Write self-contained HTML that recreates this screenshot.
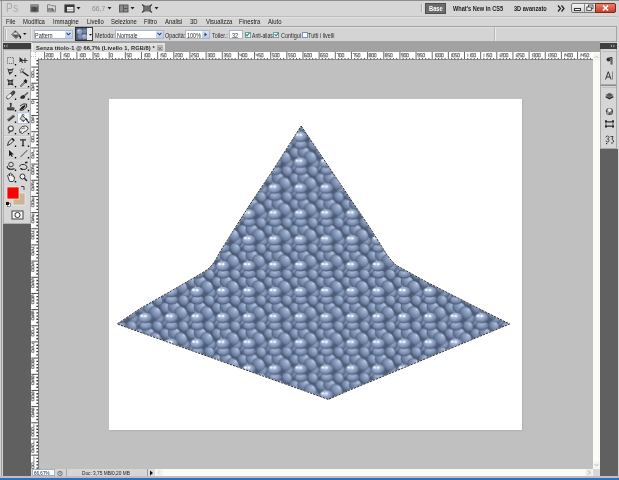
<!DOCTYPE html>
<html><head><meta charset="utf-8">
<style>
*{margin:0;padding:0;box-sizing:border-box}
html,body{width:619px;height:480px;overflow:hidden;background:#d4d4d4;font-family:"Liberation Sans",sans-serif;color:#111}
.a{position:absolute}
.t{position:absolute;white-space:nowrap;font-size:7px;line-height:8px}
.m{position:absolute;white-space:nowrap;font-size:7px;line-height:8px;top:17.5px;color:#1a1a1a;transform:scaleX(0.84);transform-origin:left}
.a{white-space:nowrap}
.m,.o,.gt{filter:grayscale(1)}
.o{position:absolute;white-space:nowrap;font-size:6.5px;line-height:7px;color:#2a2a2a;transform:scaleX(0.84) translateY(0.6px);transform-origin:left}
</style></head><body>
<!-- frame -->
<div class="a" style="left:0;top:0;width:619px;height:1px;background:#8e8e8e"></div>
<div class="a" style="left:1px;top:1px;width:1px;height:477px;background:#9a9a9a"></div>


<!-- app bar -->
<div class="a" style="left:2px;top:1px;width:615px;height:15px;background:#d6d6d6"></div>
<div class="a" style="left:2px;top:15.6px;width:615px;height:1px;background:#bdbdbd"></div>
<!-- menu bar -->
<div class="a" style="left:2px;top:16.6px;width:615px;height:9.4px;background:#d6d6d6"></div>
<div class="m" style="left:6px">File</div>
<div class="m" style="left:23px">Modifica</div>
<div class="m" style="left:53px">Immagine</div>
<div class="m" style="left:87px">Livello</div>
<div class="m" style="left:111px">Selezione</div>
<div class="m" style="left:144px">Filtro</div>
<div class="m" style="left:165px">Analisi</div>
<div class="m" style="left:190px">3D</div>
<div class="m" style="left:206px">Visualizza</div>
<div class="m" style="left:239px">Finestra</div>
<div class="m" style="left:268px">Aiuto</div>

<!-- app bar items -->
<div class="a" style="left:6px;top:0.6px;font-size:12.2px;line-height:14px;color:#ababab;letter-spacing:0.6px;transform:scaleX(0.82);transform-origin:left">Ps</div>
<svg class="a" style="left:29.5px;top:4px" width="9" height="8.5" viewBox="0 0 9 8.5"><rect x="0.4" y="0.4" width="8.2" height="7.7" rx="1" fill="#5e5e5e" stroke="#8a8a8a" stroke-width="0.8"/><rect x="1" y="1" width="7" height="1.6" fill="#909090"/><path d="M3 3.6v3.2h1.3q1 0 1-0.8q0-0.7-1-0.8q0.8-0.1 0.8-0.8q0-0.8-0.9-0.8z" fill="none" stroke="#2e2e2e" stroke-width="0.6"/><path d="M5.6 6.8v-1.8q0.3-0.6 1-0.6" fill="none" stroke="#2e2e2e" stroke-width="0.6"/></svg>
<svg class="a gt" style="left:46px;top:3px" width="11" height="10" viewBox="0 0 11 10"><path d="M1.5 1.8h3l1 1h4v6h-8z" fill="#d4d4d4" stroke="#7a7a7a" stroke-width="0.9"/><text x="2.2" y="7.6" font-size="4.3" font-weight="bold" font-family="Liberation Sans" fill="#3a3a3a">Mb</text></svg>
<svg class="a" style="left:64px;top:4px" width="11" height="9" viewBox="0 0 11 9"><rect x="1" y="1" width="9" height="7" fill="#e8e8e8" stroke="#3a3a3a" stroke-width="1.2"/><rect x="1" y="1" width="9" height="2" fill="#3a3a3a"/><rect x="1" y="1" width="2" height="7" fill="#3a3a3a"/><line x1="3" y1="5.5" x2="10" y2="5.5" stroke="#999" stroke-width="0.6"/></svg>
<svg class="a" style="left:76px;top:7px" width="5" height="3"><path d="M0.5 0h4l-2 2.5z" fill="#222"/></svg>
<div class="a" style="left:92px;top:4px;font-size:8px;line-height:9px;color:#8a8a8a;transform:scaleX(0.85);transform-origin:left">66,7</div>
<svg class="a" style="left:107px;top:7px" width="5" height="3"><path d="M0.5 0h4l-2 2.5z" fill="#222"/></svg>
<svg class="a" style="left:118px;top:4px" width="11" height="9" viewBox="0 0 11 9"><rect x="1" y="0.5" width="9.5" height="8" fill="#5a5a5a" rx="0.5"/><rect x="2" y="1.5" width="3" height="6" fill="#8a8a8a"/><rect x="6" y="1.5" width="3.5" height="2.5" fill="#8a8a8a"/><rect x="6" y="5" width="3.5" height="2.5" fill="#8a8a8a"/></svg>
<svg class="a" style="left:130px;top:7px" width="5" height="3"><path d="M0.5 0h4l-2 2.5z" fill="#222"/></svg>
<svg class="a" style="left:141px;top:4px" width="12" height="9" viewBox="0 0 12 9"><rect x="2" y="1.5" width="8" height="6" fill="#6e6e6e"/><path d="M1 0.5l2.5 2M11 0.5l-2.5 2M1 8.5l2.5-2M11 8.5l-2.5-2" stroke="#3a3a3a" stroke-width="1.2"/></svg>
<svg class="a" style="left:154px;top:7px" width="5" height="3"><path d="M0.5 0h4l-2 2.5z" fill="#222"/></svg>

<div class="a" style="left:421px;top:4px;width:1px;height:8px;background:#a8a8a8"></div>
<div class="a" style="left:422px;top:4px;width:1px;height:8px;background:#ececec"></div>
<div class="a" style="left:425px;top:3px;width:21px;height:11px;background:#6c6c6c;border:1px solid #4e4e4e"></div>
<div class="a" style="left:429px;top:5px;font-size:7px;line-height:8px;font-weight:bold;color:#fff;transform:scaleX(0.82);transform-origin:left">Base</div>
<div class="a" style="left:453px;top:5px;font-size:7px;line-height:8px;font-weight:bold;color:#222;transform:scaleX(0.8);transform-origin:left">What's New in CS5</div>
<div class="a" style="left:514px;top:5px;font-size:7px;line-height:8px;font-weight:bold;color:#222;transform:scaleX(0.8);transform-origin:left">3D avanzato</div>
<svg class="a" style="left:557px;top:5px" width="9" height="7" viewBox="0 0 9 7"><path d="M1 0.5l2.5 3l-2.5 3M4.5 0.5l2.5 3l-2.5 3" fill="none" stroke="#222" stroke-width="1.2"/></svg>
<div class="a" style="left:571px;top:3px;width:45px;height:10px;border:1px solid #7a7a7a;border-radius:2px;background:linear-gradient(#f4f4f4,#d0d0d0)"></div>
<div class="a" style="left:584px;top:4px;width:1px;height:8px;background:#8a8a8a"></div>
<div class="a" style="left:595px;top:3px;width:21px;height:10px;border:1px solid #7a2a20;border-radius:0 2px 2px 0;background:linear-gradient(#e8806c,#c8402c)"></div>
<div class="a" style="left:574px;top:8px;width:7px;height:3px;border:1px solid #333;background:#fff"></div>
<svg class="a" style="left:586px;top:4px" width="8" height="8" viewBox="0 0 8 8"><rect x="2.5" y="1" width="4.5" height="3.5" fill="#eee" stroke="#333" stroke-width="0.8"/><rect x="0.8" y="3" width="4.5" height="3.5" fill="#eee" stroke="#333" stroke-width="0.8"/></svg>
<svg class="a" style="left:601px;top:4px" width="9" height="8" viewBox="0 0 9 8"><path d="M2 1.5l5 5M7 1.5l-5 5" stroke="#fff" stroke-width="1.6"/></svg>

<!-- options bar -->
<div class="a" style="left:2px;top:16.8px;width:615px;height:0.8px;background:#e2e2e2"></div>
<div class="a" style="left:3px;top:26px;width:614px;height:16px;background:#d4d4d4;border:1px solid #a4a4a4"></div>
<div class="a" style="left:4px;top:27px;width:612px;height:0.8px;background:#e0e0e0"></div>


<div class="a" style="left:5px;top:29px;width:1px;height:11px;background:#b8b8b8"></div>
<div class="a" style="left:6px;top:29px;width:1px;height:11px;background:#ececec"></div>
<svg class="a" style="left:10px;top:29px" width="12" height="11" viewBox="0 0 12 11"><path d="M2 5.5l3.5-3.5l4 4l-3.5 3.5z" fill="#e0e0e0" stroke="#333" stroke-width="0.9"/><path d="M5 1.5l0.5 2" stroke="#333" stroke-width="0.9"/><path d="M2 5.5h7.5l-3.5 3.5z" fill="#555"/><path d="M9.5 6.5q1.5 1.5 0.8 3" stroke="#111" stroke-width="1.4" fill="none"/></svg>
<svg class="a" style="left:23px;top:33px" width="4" height="3"><path d="M0 0h3.5l-1.75 2z" fill="#111"/></svg>
<div class="a" style="left:30px;top:28px;width:1px;height:13px;background:#c4c4c4"></div>
<div class="a" style="left:31px;top:28px;width:1px;height:13px;background:#e6e6e6"></div>

<div class="a" style="left:34px;top:30px;width:39px;height:9px;background:#fff;border:1px solid #a9b6cb"></div>
<div class="a" style="left:65px;top:31px;width:7px;height:7px;background:linear-gradient(#d8e4f6,#b8cbe8)"></div>
<svg class="a" style="left:66px;top:32px" width="5" height="4"><path d="M0.5 0.8l2 2l2-2" fill="none" stroke="#2c3e66" stroke-width="1.1"/></svg>
<div class="o" style="left:34.5px;top:31px">Pattern</div>

<div class="a" style="left:75px;top:27px;width:13px;height:14px;background:#6f84a8;border:1px solid #2e2e2e"></div>
<svg class="a" style="left:76px;top:28px" width="11" height="12" viewBox="0 0 11 12"><rect width="11" height="12" fill="#4e5d7a"/><circle cx="3.5" cy="3.5" r="2.8" fill="#8fa2c4"/><circle cx="8.5" cy="3" r="2.3" fill="#7386a8"/><circle cx="4" cy="8.5" r="2.4" fill="#7b8eb0"/><circle cx="8.5" cy="8.5" r="2.6" fill="#90a3c6"/><circle cx="2.8" cy="2.8" r="0.8" fill="#e4ecf8"/><circle cx="8" cy="7.8" r="0.7" fill="#dde6f4"/></svg>
<div class="a" style="left:87px;top:27px;width:6px;height:14px;background:#ececec;border:1px solid #3a3a3a;border-left:none"></div>
<svg class="a" style="left:88.5px;top:34px" width="4" height="3"><path d="M0 0h3l-1.5 1.8z" fill="#111"/></svg>

<div class="o" style="left:95px;top:31px">Metodo:</div>
<div class="a" style="left:115px;top:30px;width:49px;height:9px;background:#fff;border:1px solid #a9b6cb"></div>
<div class="a" style="left:156px;top:31px;width:7px;height:7px;background:linear-gradient(#d8e4f6,#b8cbe8)"></div>
<svg class="a" style="left:157px;top:32px" width="5" height="4"><path d="M0.5 0.8l2 2l2-2" fill="none" stroke="#2c3e66" stroke-width="1.1"/></svg>
<div class="o" style="left:117px;top:31px">Normale</div>

<div class="o" style="left:165px;top:31px">Opacità:</div>
<div class="a" style="left:185px;top:30px;width:25px;height:9px;background:#fff;border:1px solid #a9b6cb"></div>
<div class="a" style="left:202px;top:31px;width:7px;height:7px;background:linear-gradient(#d8e4f6,#b8cbe8)"></div>
<svg class="a" style="left:204px;top:32px" width="4" height="5"><path d="M0.5 0.5l2.5 2l-2.5 2z" fill="#2c3e66"/></svg>
<div class="o" style="left:187px;top:31px">100%</div>

<div class="o" style="left:212px;top:31px">Toller.:</div>
<div class="a" style="left:229px;top:30px;width:14px;height:9px;background:#fff;border:1px solid #a9b6cb"></div>
<div class="o" style="left:232px;top:31px">32</div>

<div class="a" style="left:244.5px;top:31.5px;width:6px;height:6px;background:#fafafa;border:0.8px solid #7d94b8"></div>
<svg class="a" style="left:245.3px;top:32px" width="5" height="5"><path d="M0.6 2.2l1.4 1.6l2.4-3" fill="none" stroke="#2f9a2f" stroke-width="1.1"/></svg>
<div class="o" style="left:252px;top:31px;transform:scaleX(0.78) translateY(0.6px)">Anti-alias</div>
<div class="a" style="left:273px;top:31.5px;width:6px;height:6px;background:#fafafa;border:0.8px solid #7d94b8"></div>
<svg class="a" style="left:273.8px;top:32px" width="5" height="5"><path d="M0.6 2.2l1.4 1.6l2.4-3" fill="none" stroke="#2f9a2f" stroke-width="1.1"/></svg>
<div class="o" style="left:280.5px;top:31px">Contigui</div>
<div class="a" style="left:301.5px;top:31.5px;width:6px;height:6px;background:#fafafa;border:0.8px solid #7d94b8"></div>
<div class="o" style="left:307.5px;top:31px">Tutti i livelli</div>

<div class="a" style="left:494px;top:27px;width:1px;height:14px;background:#b8b8b8"></div>
<div class="a" style="left:495px;top:27px;width:1px;height:14px;background:#ececec"></div>

<!-- tool panel -->
<div class="a" style="left:3px;top:43px;width:28px;height:6px;background:#3e3e3e"></div>
<div class="a" style="left:3px;top:49px;width:28px;height:175px;background:#d6d6d6;border:1px solid #b0b0b0"></div>
<div class="a" style="left:3px;top:224px;width:28px;height:252.5px;background:#606060"></div>


<svg class="a" style="left:3px;top:43px" width="28" height="182" viewBox="3 43 28 182">
<path d="M5 46h1.2M7.5 46h1.2" stroke="#bbb" stroke-width="0"/>
<path d="M5.2 45l-1.2 1l1.2 1M7.6 45l-1.2 1l1.2 1" fill="none" stroke="#d8d8d8" stroke-width="0.7"/>
<!-- grip -->
<rect x="4" y="50.5" width="26" height="1" fill="#c0c0c0"/>
<rect x="4" y="51.5" width="26" height="0.6" fill="#eeeeee"/>
<!-- marquee -->
<rect x="7.5" y="57.5" width="6" height="6" fill="none" stroke="#4a4a4a" stroke-width="0.8" stroke-dasharray="1.2 1"/>
<!-- move -->
<path d="M19.5 57v5.5l1.5-1.2l1.3 2l0.8-0.5l-1.2-2h2z" fill="#2a2a2a"/>
<path d="M25 58v5M22.5 60.5h5" stroke="#333" stroke-width="1.1"/>
<!-- lasso -->
<path d="M7.2 68.3q3 2 6.4-0.3l-1 4.2l-3.2 2.8z" fill="#3a3a3a"/>
<path d="M9 71q2 0.9 3.6-0.2" stroke="#f2f2f2" stroke-width="1" fill="none"/>
<!-- wand -->
<path d="M22 71.5l6.5 4.5" stroke="#1a1a1a" stroke-width="1.5"/>
<path d="M21.5 68l0.6 1.5M19.5 70l1.5 0.6M24.5 68.5l-1 1.2M20 73l1.5-1" stroke="#777" stroke-width="0.9"/>
<circle cx="22" cy="71" r="1.6" fill="none" stroke="#888" stroke-width="0.8"/>
<!-- crop -->
<path d="M7 79l3 1.2l3.5-1l-1 3.2l1.2 3.2l-3.3-0.8l-2.7 0.8l0.6-3z" fill="#353535"/>
<circle cx="10.4" cy="82.3" r="1.2" fill="#8a8a8a"/>
<!-- eyedropper -->
<path d="M20.5 86.5l4.5-4.5" stroke="#333" stroke-width="1.6"/>
<path d="M21 86l4-4" stroke="#ddd" stroke-width="0.6"/>
<path d="M24 80.5l2.5 2.5M25 79.5l2 2" stroke="#1a1a1a" stroke-width="1.6"/>
<!-- separator -->
<rect x="4" y="88.5" width="26" height="0.8" fill="#b8b8b8"/>
<rect x="4" y="89.3" width="26" height="0.6" fill="#f0f0f0"/>
<!-- healing -->
<path d="M8 97.5l5.5-5" stroke="#3a3a3a" stroke-width="3.6" stroke-linecap="round"/>
<path d="M8.2 97.2l2.2-2" stroke="#f0f0f0" stroke-width="2.6" stroke-linecap="round"/>
<path d="M11 94.5l2.5-2.3" stroke="#777" stroke-width="1"/>
<!-- brush -->
<path d="M20 98q1-3 4-3l1.2 1.2q0 3-4 2.5z" fill="#2a2a2a"/>
<path d="M24.5 95.5l3.5-3" stroke="#555" stroke-width="1.4"/>
<!-- stamp -->
<circle cx="10.7" cy="103.8" r="1.1" fill="#333"/>
<rect x="10" y="104" width="1.5" height="3.5" fill="#3a3a3a"/>
<rect x="7" y="107.3" width="7.5" height="2.6" rx="0.9" fill="#3a3a3a"/>
<rect x="7.5" y="107.6" width="6.5" height="0.8" fill="#7a7a7a"/>
<rect x="7.5" y="110" width="6.5" height="0.8" fill="#8a8a8a"/>
<!-- history brush -->
<path d="M20 106q3-3 6.5-2q1.5 3-2.5 5.5q-2.5 1.5-4.5 0.5" fill="none" stroke="#2e2e2e" stroke-width="1"/>
<path d="M19.5 109.5q2-3.5 5-4.5l1.2 1q-1.5 3-5.5 4z" fill="#1e1e1e"/>
<path d="M21.5 104.8q1.5-0.8 3.5-0.6" stroke="#777" stroke-width="0.6" fill="none"/>
<!-- eraser -->
<path d="M7 119.8l6.2-5l1.9 1.6l-6.2 5z" fill="#454545"/>
<path d="M7.6 118.9l5.6-4.4l0.8 0.6l-5.6 4.4z" fill="#8a8a8a"/>
<!-- bucket selected -->
<rect x="17.5" y="112.8" width="11.8" height="10.7" fill="#f4f6f9" stroke="#abc0d6" stroke-width="0.8"/>
<path d="M20 118.5l2.8-2.6l3.2 3l-2.8 2.8z" fill="#cfcfcf" stroke="#2e2e2e" stroke-width="0.8"/>
<path d="M20.3 118.8l3 2.7l1-1q-2-0.6-4-1.7z" fill="#555"/>
<path d="M22 116.5q-0.5-2 1-2.3q1.2 0 1 1.6" fill="none" stroke="#333" stroke-width="0.7"/>
<path d="M25.8 118.6q1.6 1 1.5 3" stroke="#151515" stroke-width="1.3" fill="none"/>
<!-- blur -->
<path d="M10.8 125.5q-3.2 0.3-3.2 3.3q0 1.8 1.5 2.5l-1.2 1.8l1.2 0.3l1.3-1.5q3.3 0 3.5-3q0-3.5-3.1-3.4z" fill="#4a4a4a"/>
<circle cx="10.8" cy="128.5" r="1.9" fill="#f0f0f0"/>
<!-- smudge -->
<path d="M19.5 129.5q2-4 6-3.5q2.5 0.5 2.5 2.5q-0.5 2.5-4 3.5l-1.5 1.5l-2.5-1z" fill="#ececec" stroke="#3a3a3a" stroke-width="0.9"/>
<path d="M21.5 129q1.5-1.2 3.5-0.8" stroke="#555" stroke-width="0.8" fill="none"/>
<path d="M20 132.5l1.2-1.2" stroke="#222" stroke-width="1"/>
<!-- separator -->
<rect x="4" y="135.5" width="26" height="0.8" fill="#b8b8b8"/>
<rect x="4" y="136.3" width="26" height="0.6" fill="#f0f0f0"/>
<!-- pen -->
<path d="M7.5 145.5l1-3.5l3.5-3.5l2 2l-3.5 3.5z" fill="#ddd" stroke="#333" stroke-width="1"/>
<path d="M12 138.5l2 2" stroke="#111" stroke-width="1.6"/>
<!-- type -->
<path d="M20 139.8h6M23 139.8v5.8M21.8 145.6h2.4" stroke="#2a2a2a" stroke-width="1.3"/>
<!-- path selection -->
<path d="M9 150v6.5l1.6-1.4l1.2 2l1-0.5l-1.1-2h2.2z" fill="#1e1e1e"/>
<!-- line -->
<path d="M20.5 157l7-7" stroke="#444" stroke-width="1"/>
<!-- separator -->
<rect x="4" y="158.8" width="26" height="0.8" fill="#b8b8b8"/>
<rect x="4" y="159.6" width="26" height="0.6" fill="#f0f0f0"/>
<!-- 3d rotate -->
<circle cx="11" cy="164.5" r="2.3" fill="#ddd" stroke="#333" stroke-width="0.9"/>
<path d="M7.5 166q-1 2 1.5 3q3 1 5.5-0.5" fill="none" stroke="#333" stroke-width="1.1"/>
<path d="M8.5 168.5l1.5 0.8" stroke="#111" stroke-width="1.3"/>
<!-- 3d camera -->
<path d="M19 166.5q2-3 5.5-2q3 1 2.5 3.5q-1.5 2-4.5 1.5q-2 -0.5-2.5-1" fill="none" stroke="#333" stroke-width="1"/>
<path d="M25 162.8l2.5-0.6" stroke="#222" stroke-width="1.4"/>
<path d="M21 168.5l1.5 1" stroke="#111" stroke-width="1.3"/>
<!-- hand -->
<path d="M8 177q-1-2 0.5-2.5l1 1.5v-2.5q1-1 1.8 0v2q0.8-1.5 1.8-0.5v2q1-1 1.5 0q0 3-1.5 4.5h-3.5z" fill="#f4f4f4" stroke="#333" stroke-width="0.9"/>
<!-- zoom -->
<circle cx="22.5" cy="176.5" r="2.5" fill="#f0f0f0" stroke="#333" stroke-width="1"/>
<path d="M24.3 178.3l2.7 2.7" stroke="#222" stroke-width="1.5"/>
<!-- corner dots -->
<g fill="#000">
<rect x="14.8" y="64" width="1.4" height="1.4"/><rect x="14.8" y="75" width="1.4" height="1.4"/><rect x="14.8" y="86" width="1.4" height="1.4"/>
<rect x="27.8" y="86" width="1.4" height="1.4"/>
<rect x="14.8" y="98.5" width="1.4" height="1.4"/><rect x="27.8" y="98.5" width="1.4" height="1.4"/>
<rect x="14.8" y="110" width="1.4" height="1.4"/><rect x="27.8" y="110" width="1.4" height="1.4"/>
<rect x="14.8" y="121.5" width="1.4" height="1.4"/><rect x="27.8" y="121.5" width="1.4" height="1.4"/>
<rect x="14.8" y="133" width="1.4" height="1.4"/><rect x="27.8" y="133" width="1.4" height="1.4"/>
<rect x="14.8" y="145.5" width="1.4" height="1.4"/><rect x="27.8" y="145.5" width="1.4" height="1.4"/>
<rect x="14.8" y="157" width="1.4" height="1.4"/><rect x="27.8" y="157" width="1.4" height="1.4"/>
<rect x="14.8" y="169.5" width="1.4" height="1.4"/><rect x="27.8" y="169.5" width="1.4" height="1.4"/>
<rect x="14.8" y="181" width="1.4" height="1.4"/>
</g>
<!-- colors -->
<path d="M21.5 186.5h2.5v2.5" fill="none" stroke="#222" stroke-width="0.8"/>
<path d="M21 186.5l1 -0.8v1.6zM24 190l-0.8-1h1.6z" fill="#222"/>
<rect x="13" y="193" width="12" height="12" fill="#c9b794" stroke="#f2f2f2" stroke-width="0.6"/>
<rect x="7" y="187" width="12" height="12" fill="#ff0000" stroke="#f4f4f4" stroke-width="0.7"/>
<rect x="7.5" y="203.5" width="3" height="3" fill="#fff" stroke="#222" stroke-width="0.5"/>
<rect x="6" y="202" width="3" height="3" fill="#111"/>
<!-- quick mask -->
<rect x="12" y="211" width="11" height="8" fill="#f4f4f4" stroke="#444" stroke-width="1"/>
<circle cx="17.5" cy="215" r="2.6" fill="#fff" stroke="#333" stroke-width="1"/>
</svg>

<!-- doc tab bar -->
<div class="a" style="left:32px;top:42px;width:568px;height:10px;background:#a2a2a2"></div>
<div class="a" style="left:31.5px;top:42.6px;width:133.7px;height:9.6px;background:linear-gradient(#e2e2e2,#d6d6d6);border-left:0.8px solid #ececec"></div>


<div class="gt a" style="left:35.7px;top:44.8px;font-size:6px;line-height:7px;color:#2a2a2a;font-weight:bold;letter-spacing:0.1px;transform:scaleX(0.952);transform-origin:left">Senza titolo-1 @ 66,7% (Livello 1, RGB/8) *</div>
<div class="a" style="left:156.5px;top:45px;width:6.5px;height:6px;background:#c4c4c4;border:0.5px solid #b0b0b0"></div>
<svg class="a" style="left:157px;top:45.5px" width="6" height="5" viewBox="0 0 6 5"><path d="M1.5 1l3 3M4.5 1l-3 3" stroke="#555" stroke-width="0.8"/></svg>

<!-- rulers -->
<svg class="a" style="left:31px;top:52px" width="562" height="8" viewBox="31 52 562 8">
<rect x="31" y="52" width="562" height="8" fill="#fff"/>
<rect x="31" y="59.2" width="562" height="0.8" fill="#707070"/>
<path d="M44.60 52v7M60.75 52v7M76.90 52v7M93.05 52v7M109.20 52v7M125.35 52v7M141.50 52v7M157.65 52v7M173.80 52v7M189.95 52v7M206.10 52v7M222.25 52v7M238.40 52v7M254.55 52v7M270.70 52v7M286.85 52v7M303.00 52v7M319.15 52v7M335.30 52v7M351.45 52v7M367.60 52v7M383.75 52v7M399.90 52v7M416.05 52v7M432.20 52v7M448.35 52v7M464.50 52v7M480.65 52v7M496.80 52v7M512.95 52v7M529.10 52v7M545.25 52v7M561.40 52v7M577.55 52v7" stroke="#444" stroke-width="0.8"/>
<path d="M37.34 59.2l0.8-1.4l0.8 1.4zM40.57 59.2l0.8-1.4l0.8 1.4zM47.03 59.2l0.8-1.4l0.8 1.4zM50.26 59.2l0.8-1.4l0.8 1.4zM53.49 59.2l0.8-1.4l0.8 1.4zM56.72 59.2l0.8-1.4l0.8 1.4zM63.18 59.2l0.8-1.4l0.8 1.4zM66.41 59.2l0.8-1.4l0.8 1.4zM69.64 59.2l0.8-1.4l0.8 1.4zM72.87 59.2l0.8-1.4l0.8 1.4zM79.33 59.2l0.8-1.4l0.8 1.4zM82.56 59.2l0.8-1.4l0.8 1.4zM85.79 59.2l0.8-1.4l0.8 1.4zM89.02 59.2l0.8-1.4l0.8 1.4zM95.48 59.2l0.8-1.4l0.8 1.4zM98.71 59.2l0.8-1.4l0.8 1.4zM101.94 59.2l0.8-1.4l0.8 1.4zM105.17 59.2l0.8-1.4l0.8 1.4zM111.63 59.2l0.8-1.4l0.8 1.4zM114.86 59.2l0.8-1.4l0.8 1.4zM118.09 59.2l0.8-1.4l0.8 1.4zM121.32 59.2l0.8-1.4l0.8 1.4zM127.78 59.2l0.8-1.4l0.8 1.4zM131.01 59.2l0.8-1.4l0.8 1.4zM134.24 59.2l0.8-1.4l0.8 1.4zM137.47 59.2l0.8-1.4l0.8 1.4zM143.93 59.2l0.8-1.4l0.8 1.4zM147.16 59.2l0.8-1.4l0.8 1.4zM150.39 59.2l0.8-1.4l0.8 1.4zM153.62 59.2l0.8-1.4l0.8 1.4zM160.08 59.2l0.8-1.4l0.8 1.4zM163.31 59.2l0.8-1.4l0.8 1.4zM166.54 59.2l0.8-1.4l0.8 1.4zM169.77 59.2l0.8-1.4l0.8 1.4zM176.23 59.2l0.8-1.4l0.8 1.4zM179.46 59.2l0.8-1.4l0.8 1.4zM182.69 59.2l0.8-1.4l0.8 1.4zM185.92 59.2l0.8-1.4l0.8 1.4zM192.38 59.2l0.8-1.4l0.8 1.4zM195.61 59.2l0.8-1.4l0.8 1.4zM198.84 59.2l0.8-1.4l0.8 1.4zM202.07 59.2l0.8-1.4l0.8 1.4zM208.53 59.2l0.8-1.4l0.8 1.4zM211.76 59.2l0.8-1.4l0.8 1.4zM214.99 59.2l0.8-1.4l0.8 1.4zM218.22 59.2l0.8-1.4l0.8 1.4zM224.68 59.2l0.8-1.4l0.8 1.4zM227.91 59.2l0.8-1.4l0.8 1.4zM231.14 59.2l0.8-1.4l0.8 1.4zM234.37 59.2l0.8-1.4l0.8 1.4zM240.83 59.2l0.8-1.4l0.8 1.4zM244.06 59.2l0.8-1.4l0.8 1.4zM247.29 59.2l0.8-1.4l0.8 1.4zM250.52 59.2l0.8-1.4l0.8 1.4zM256.98 59.2l0.8-1.4l0.8 1.4zM260.21 59.2l0.8-1.4l0.8 1.4zM263.44 59.2l0.8-1.4l0.8 1.4zM266.67 59.2l0.8-1.4l0.8 1.4zM273.13 59.2l0.8-1.4l0.8 1.4zM276.36 59.2l0.8-1.4l0.8 1.4zM279.59 59.2l0.8-1.4l0.8 1.4zM282.82 59.2l0.8-1.4l0.8 1.4zM289.28 59.2l0.8-1.4l0.8 1.4zM292.51 59.2l0.8-1.4l0.8 1.4zM295.74 59.2l0.8-1.4l0.8 1.4zM298.97 59.2l0.8-1.4l0.8 1.4zM305.43 59.2l0.8-1.4l0.8 1.4zM308.66 59.2l0.8-1.4l0.8 1.4zM311.89 59.2l0.8-1.4l0.8 1.4zM315.12 59.2l0.8-1.4l0.8 1.4zM321.58 59.2l0.8-1.4l0.8 1.4zM324.81 59.2l0.8-1.4l0.8 1.4zM328.04 59.2l0.8-1.4l0.8 1.4zM331.27 59.2l0.8-1.4l0.8 1.4zM337.73 59.2l0.8-1.4l0.8 1.4zM340.96 59.2l0.8-1.4l0.8 1.4zM344.19 59.2l0.8-1.4l0.8 1.4zM347.42 59.2l0.8-1.4l0.8 1.4zM353.88 59.2l0.8-1.4l0.8 1.4zM357.11 59.2l0.8-1.4l0.8 1.4zM360.34 59.2l0.8-1.4l0.8 1.4zM363.57 59.2l0.8-1.4l0.8 1.4zM370.03 59.2l0.8-1.4l0.8 1.4zM373.26 59.2l0.8-1.4l0.8 1.4zM376.49 59.2l0.8-1.4l0.8 1.4zM379.72 59.2l0.8-1.4l0.8 1.4zM386.18 59.2l0.8-1.4l0.8 1.4zM389.41 59.2l0.8-1.4l0.8 1.4zM392.64 59.2l0.8-1.4l0.8 1.4zM395.87 59.2l0.8-1.4l0.8 1.4zM402.33 59.2l0.8-1.4l0.8 1.4zM405.56 59.2l0.8-1.4l0.8 1.4zM408.79 59.2l0.8-1.4l0.8 1.4zM412.02 59.2l0.8-1.4l0.8 1.4zM418.48 59.2l0.8-1.4l0.8 1.4zM421.71 59.2l0.8-1.4l0.8 1.4zM424.94 59.2l0.8-1.4l0.8 1.4zM428.17 59.2l0.8-1.4l0.8 1.4zM434.63 59.2l0.8-1.4l0.8 1.4zM437.86 59.2l0.8-1.4l0.8 1.4zM441.09 59.2l0.8-1.4l0.8 1.4zM444.32 59.2l0.8-1.4l0.8 1.4zM450.78 59.2l0.8-1.4l0.8 1.4zM454.01 59.2l0.8-1.4l0.8 1.4zM457.24 59.2l0.8-1.4l0.8 1.4zM460.47 59.2l0.8-1.4l0.8 1.4zM466.93 59.2l0.8-1.4l0.8 1.4zM470.16 59.2l0.8-1.4l0.8 1.4zM473.39 59.2l0.8-1.4l0.8 1.4zM476.62 59.2l0.8-1.4l0.8 1.4zM483.08 59.2l0.8-1.4l0.8 1.4zM486.31 59.2l0.8-1.4l0.8 1.4zM489.54 59.2l0.8-1.4l0.8 1.4zM492.77 59.2l0.8-1.4l0.8 1.4zM499.23 59.2l0.8-1.4l0.8 1.4zM502.46 59.2l0.8-1.4l0.8 1.4zM505.69 59.2l0.8-1.4l0.8 1.4zM508.92 59.2l0.8-1.4l0.8 1.4zM515.38 59.2l0.8-1.4l0.8 1.4zM518.61 59.2l0.8-1.4l0.8 1.4zM521.84 59.2l0.8-1.4l0.8 1.4zM525.07 59.2l0.8-1.4l0.8 1.4zM531.53 59.2l0.8-1.4l0.8 1.4zM534.76 59.2l0.8-1.4l0.8 1.4zM537.99 59.2l0.8-1.4l0.8 1.4zM541.22 59.2l0.8-1.4l0.8 1.4zM547.68 59.2l0.8-1.4l0.8 1.4zM550.91 59.2l0.8-1.4l0.8 1.4zM554.14 59.2l0.8-1.4l0.8 1.4zM557.37 59.2l0.8-1.4l0.8 1.4zM563.83 59.2l0.8-1.4l0.8 1.4zM567.06 59.2l0.8-1.4l0.8 1.4zM570.29 59.2l0.8-1.4l0.8 1.4zM573.52 59.2l0.8-1.4l0.8 1.4zM579.98 59.2l0.8-1.4l0.8 1.4zM583.21 59.2l0.8-1.4l0.8 1.4zM586.44 59.2l0.8-1.4l0.8 1.4zM589.67 59.2l0.8-1.4l0.8 1.4z" fill="#333"/>
<path d="M46.10 53.50L47.90 53.50M47.90 53.50L47.90 55.20M46.10 55.20L47.90 55.20M46.10 55.20L46.10 56.90M46.10 56.90L47.90 56.90M48.70 53.50L50.50 53.50M50.50 53.50L50.50 55.20M50.50 55.20L50.50 56.90M48.70 56.90L50.50 56.90M48.70 55.20L48.70 56.90M48.70 53.50L48.70 55.20M51.30 53.50L53.10 53.50M53.10 53.50L53.10 55.20M53.10 55.20L53.10 56.90M51.30 56.90L53.10 56.90M51.30 55.20L51.30 56.90M51.30 53.50L51.30 55.20M64.05 53.50L64.05 55.20M64.05 55.20L64.05 56.90M64.85 53.50L66.65 53.50M64.85 53.50L64.85 55.20M64.85 55.20L66.65 55.20M66.65 55.20L66.65 56.90M64.85 56.90L66.65 56.90M67.45 53.50L69.25 53.50M69.25 53.50L69.25 55.20M69.25 55.20L69.25 56.90M67.45 56.90L69.25 56.90M67.45 55.20L67.45 56.90M67.45 53.50L67.45 55.20M80.20 53.50L80.20 55.20M80.20 55.20L80.20 56.90M81.00 53.50L82.80 53.50M82.80 53.50L82.80 55.20M82.80 55.20L82.80 56.90M81.00 56.90L82.80 56.90M81.00 55.20L81.00 56.90M81.00 53.50L81.00 55.20M83.60 53.50L85.40 53.50M85.40 53.50L85.40 55.20M85.40 55.20L85.40 56.90M83.60 56.90L85.40 56.90M83.60 55.20L83.60 56.90M83.60 53.50L83.60 55.20M94.55 53.50L96.35 53.50M94.55 53.50L94.55 55.20M94.55 55.20L96.35 55.20M96.35 55.20L96.35 56.90M94.55 56.90L96.35 56.90M97.15 53.50L98.95 53.50M98.95 53.50L98.95 55.20M98.95 55.20L98.95 56.90M97.15 56.90L98.95 56.90M97.15 55.20L97.15 56.90M97.15 53.50L97.15 55.20M110.70 53.50L112.50 53.50M112.50 53.50L112.50 55.20M112.50 55.20L112.50 56.90M110.70 56.90L112.50 56.90M110.70 55.20L110.70 56.90M110.70 53.50L110.70 55.20M126.85 53.50L128.65 53.50M126.85 53.50L126.85 55.20M126.85 55.20L128.65 55.20M128.65 55.20L128.65 56.90M126.85 56.90L128.65 56.90M129.45 53.50L131.25 53.50M131.25 53.50L131.25 55.20M131.25 55.20L131.25 56.90M129.45 56.90L131.25 56.90M129.45 55.20L129.45 56.90M129.45 53.50L129.45 55.20M144.80 53.50L144.80 55.20M144.80 55.20L144.80 56.90M145.60 53.50L147.40 53.50M147.40 53.50L147.40 55.20M147.40 55.20L147.40 56.90M145.60 56.90L147.40 56.90M145.60 55.20L145.60 56.90M145.60 53.50L145.60 55.20M148.20 53.50L150.00 53.50M150.00 53.50L150.00 55.20M150.00 55.20L150.00 56.90M148.20 56.90L150.00 56.90M148.20 55.20L148.20 56.90M148.20 53.50L148.20 55.20M160.95 53.50L160.95 55.20M160.95 55.20L160.95 56.90M161.75 53.50L163.55 53.50M161.75 53.50L161.75 55.20M161.75 55.20L163.55 55.20M163.55 55.20L163.55 56.90M161.75 56.90L163.55 56.90M164.35 53.50L166.15 53.50M166.15 53.50L166.15 55.20M166.15 55.20L166.15 56.90M164.35 56.90L166.15 56.90M164.35 55.20L164.35 56.90M164.35 53.50L164.35 55.20M175.30 53.50L177.10 53.50M177.10 53.50L177.10 55.20M175.30 55.20L177.10 55.20M175.30 55.20L175.30 56.90M175.30 56.90L177.10 56.90M177.90 53.50L179.70 53.50M179.70 53.50L179.70 55.20M179.70 55.20L179.70 56.90M177.90 56.90L179.70 56.90M177.90 55.20L177.90 56.90M177.90 53.50L177.90 55.20M180.50 53.50L182.30 53.50M182.30 53.50L182.30 55.20M182.30 55.20L182.30 56.90M180.50 56.90L182.30 56.90M180.50 55.20L180.50 56.90M180.50 53.50L180.50 55.20M191.45 53.50L193.25 53.50M193.25 53.50L193.25 55.20M191.45 55.20L193.25 55.20M191.45 55.20L191.45 56.90M191.45 56.90L193.25 56.90M194.05 53.50L195.85 53.50M194.05 53.50L194.05 55.20M194.05 55.20L195.85 55.20M195.85 55.20L195.85 56.90M194.05 56.90L195.85 56.90M196.65 53.50L198.45 53.50M198.45 53.50L198.45 55.20M198.45 55.20L198.45 56.90M196.65 56.90L198.45 56.90M196.65 55.20L196.65 56.90M196.65 53.50L196.65 55.20M207.60 53.50L209.40 53.50M209.40 53.50L209.40 55.20M207.60 55.20L209.40 55.20M209.40 55.20L209.40 56.90M207.60 56.90L209.40 56.90M210.20 53.50L212.00 53.50M212.00 53.50L212.00 55.20M212.00 55.20L212.00 56.90M210.20 56.90L212.00 56.90M210.20 55.20L210.20 56.90M210.20 53.50L210.20 55.20M212.80 53.50L214.60 53.50M214.60 53.50L214.60 55.20M214.60 55.20L214.60 56.90M212.80 56.90L214.60 56.90M212.80 55.20L212.80 56.90M212.80 53.50L212.80 55.20M223.75 53.50L225.55 53.50M225.55 53.50L225.55 55.20M223.75 55.20L225.55 55.20M225.55 55.20L225.55 56.90M223.75 56.90L225.55 56.90M226.35 53.50L228.15 53.50M226.35 53.50L226.35 55.20M226.35 55.20L228.15 55.20M228.15 55.20L228.15 56.90M226.35 56.90L228.15 56.90M228.95 53.50L230.75 53.50M230.75 53.50L230.75 55.20M230.75 55.20L230.75 56.90M228.95 56.90L230.75 56.90M228.95 55.20L228.95 56.90M228.95 53.50L228.95 55.20M239.90 53.50L239.90 55.20M239.90 55.20L241.70 55.20M241.70 53.50L241.70 55.20M241.70 55.20L241.70 56.90M242.50 53.50L244.30 53.50M244.30 53.50L244.30 55.20M244.30 55.20L244.30 56.90M242.50 56.90L244.30 56.90M242.50 55.20L242.50 56.90M242.50 53.50L242.50 55.20M245.10 53.50L246.90 53.50M246.90 53.50L246.90 55.20M246.90 55.20L246.90 56.90M245.10 56.90L246.90 56.90M245.10 55.20L245.10 56.90M245.10 53.50L245.10 55.20M256.05 53.50L256.05 55.20M256.05 55.20L257.85 55.20M257.85 53.50L257.85 55.20M257.85 55.20L257.85 56.90M258.65 53.50L260.45 53.50M258.65 53.50L258.65 55.20M258.65 55.20L260.45 55.20M260.45 55.20L260.45 56.90M258.65 56.90L260.45 56.90M261.25 53.50L263.05 53.50M263.05 53.50L263.05 55.20M263.05 55.20L263.05 56.90M261.25 56.90L263.05 56.90M261.25 55.20L261.25 56.90M261.25 53.50L261.25 55.20M272.20 53.50L274.00 53.50M272.20 53.50L272.20 55.20M272.20 55.20L274.00 55.20M274.00 55.20L274.00 56.90M272.20 56.90L274.00 56.90M274.80 53.50L276.60 53.50M276.60 53.50L276.60 55.20M276.60 55.20L276.60 56.90M274.80 56.90L276.60 56.90M274.80 55.20L274.80 56.90M274.80 53.50L274.80 55.20M277.40 53.50L279.20 53.50M279.20 53.50L279.20 55.20M279.20 55.20L279.20 56.90M277.40 56.90L279.20 56.90M277.40 55.20L277.40 56.90M277.40 53.50L277.40 55.20M288.35 53.50L290.15 53.50M288.35 53.50L288.35 55.20M288.35 55.20L290.15 55.20M290.15 55.20L290.15 56.90M288.35 56.90L290.15 56.90M290.95 53.50L292.75 53.50M290.95 53.50L290.95 55.20M290.95 55.20L292.75 55.20M292.75 55.20L292.75 56.90M290.95 56.90L292.75 56.90M293.55 53.50L295.35 53.50M295.35 53.50L295.35 55.20M295.35 55.20L295.35 56.90M293.55 56.90L295.35 56.90M293.55 55.20L293.55 56.90M293.55 53.50L293.55 55.20M304.50 53.50L306.30 53.50M304.50 53.50L304.50 55.20M304.50 55.20L306.30 55.20M304.50 55.20L304.50 56.90M306.30 55.20L306.30 56.90M304.50 56.90L306.30 56.90M307.10 53.50L308.90 53.50M308.90 53.50L308.90 55.20M308.90 55.20L308.90 56.90M307.10 56.90L308.90 56.90M307.10 55.20L307.10 56.90M307.10 53.50L307.10 55.20M309.70 53.50L311.50 53.50M311.50 53.50L311.50 55.20M311.50 55.20L311.50 56.90M309.70 56.90L311.50 56.90M309.70 55.20L309.70 56.90M309.70 53.50L309.70 55.20M320.65 53.50L322.45 53.50M320.65 53.50L320.65 55.20M320.65 55.20L322.45 55.20M320.65 55.20L320.65 56.90M322.45 55.20L322.45 56.90M320.65 56.90L322.45 56.90M323.25 53.50L325.05 53.50M323.25 53.50L323.25 55.20M323.25 55.20L325.05 55.20M325.05 55.20L325.05 56.90M323.25 56.90L325.05 56.90M325.85 53.50L327.65 53.50M327.65 53.50L327.65 55.20M327.65 55.20L327.65 56.90M325.85 56.90L327.65 56.90M325.85 55.20L325.85 56.90M325.85 53.50L325.85 55.20M336.80 53.50L338.60 53.50M338.60 53.50L338.60 55.20M338.60 55.20L338.60 56.90M339.40 53.50L341.20 53.50M341.20 53.50L341.20 55.20M341.20 55.20L341.20 56.90M339.40 56.90L341.20 56.90M339.40 55.20L339.40 56.90M339.40 53.50L339.40 55.20M342.00 53.50L343.80 53.50M343.80 53.50L343.80 55.20M343.80 55.20L343.80 56.90M342.00 56.90L343.80 56.90M342.00 55.20L342.00 56.90M342.00 53.50L342.00 55.20M352.95 53.50L354.75 53.50M354.75 53.50L354.75 55.20M354.75 55.20L354.75 56.90M355.55 53.50L357.35 53.50M355.55 53.50L355.55 55.20M355.55 55.20L357.35 55.20M357.35 55.20L357.35 56.90M355.55 56.90L357.35 56.90M358.15 53.50L359.95 53.50M359.95 53.50L359.95 55.20M359.95 55.20L359.95 56.90M358.15 56.90L359.95 56.90M358.15 55.20L358.15 56.90M358.15 53.50L358.15 55.20M369.10 53.50L370.90 53.50M370.90 53.50L370.90 55.20M370.90 55.20L370.90 56.90M369.10 56.90L370.90 56.90M369.10 55.20L369.10 56.90M369.10 53.50L369.10 55.20M369.10 55.20L370.90 55.20M371.70 53.50L373.50 53.50M373.50 53.50L373.50 55.20M373.50 55.20L373.50 56.90M371.70 56.90L373.50 56.90M371.70 55.20L371.70 56.90M371.70 53.50L371.70 55.20M374.30 53.50L376.10 53.50M376.10 53.50L376.10 55.20M376.10 55.20L376.10 56.90M374.30 56.90L376.10 56.90M374.30 55.20L374.30 56.90M374.30 53.50L374.30 55.20M385.25 53.50L387.05 53.50M387.05 53.50L387.05 55.20M387.05 55.20L387.05 56.90M385.25 56.90L387.05 56.90M385.25 55.20L385.25 56.90M385.25 53.50L385.25 55.20M385.25 55.20L387.05 55.20M387.85 53.50L389.65 53.50M387.85 53.50L387.85 55.20M387.85 55.20L389.65 55.20M389.65 55.20L389.65 56.90M387.85 56.90L389.65 56.90M390.45 53.50L392.25 53.50M392.25 53.50L392.25 55.20M392.25 55.20L392.25 56.90M390.45 56.90L392.25 56.90M390.45 55.20L390.45 56.90M390.45 53.50L390.45 55.20M401.40 53.50L403.20 53.50M403.20 53.50L403.20 55.20M403.20 55.20L403.20 56.90M401.40 56.90L403.20 56.90M401.40 53.50L401.40 55.20M401.40 55.20L403.20 55.20M404.00 53.50L405.80 53.50M405.80 53.50L405.80 55.20M405.80 55.20L405.80 56.90M404.00 56.90L405.80 56.90M404.00 55.20L404.00 56.90M404.00 53.50L404.00 55.20M406.60 53.50L408.40 53.50M408.40 53.50L408.40 55.20M408.40 55.20L408.40 56.90M406.60 56.90L408.40 56.90M406.60 55.20L406.60 56.90M406.60 53.50L406.60 55.20M417.55 53.50L419.35 53.50M419.35 53.50L419.35 55.20M419.35 55.20L419.35 56.90M417.55 56.90L419.35 56.90M417.55 53.50L417.55 55.20M417.55 55.20L419.35 55.20M420.15 53.50L421.95 53.50M420.15 53.50L420.15 55.20M420.15 55.20L421.95 55.20M421.95 55.20L421.95 56.90M420.15 56.90L421.95 56.90M422.75 53.50L424.55 53.50M424.55 53.50L424.55 55.20M424.55 55.20L424.55 56.90M422.75 56.90L424.55 56.90M422.75 55.20L422.75 56.90M422.75 53.50L422.75 55.20M435.50 53.50L435.50 55.20M435.50 55.20L435.50 56.90M436.30 53.50L438.10 53.50M438.10 53.50L438.10 55.20M438.10 55.20L438.10 56.90M436.30 56.90L438.10 56.90M436.30 55.20L436.30 56.90M436.30 53.50L436.30 55.20M438.90 53.50L440.70 53.50M440.70 53.50L440.70 55.20M440.70 55.20L440.70 56.90M438.90 56.90L440.70 56.90M438.90 55.20L438.90 56.90M438.90 53.50L438.90 55.20M441.50 53.50L443.30 53.50M443.30 53.50L443.30 55.20M443.30 55.20L443.30 56.90M441.50 56.90L443.30 56.90M441.50 55.20L441.50 56.90M441.50 53.50L441.50 55.20M451.65 53.50L451.65 55.20M451.65 55.20L451.65 56.90M452.45 53.50L454.25 53.50M454.25 53.50L454.25 55.20M454.25 55.20L454.25 56.90M452.45 56.90L454.25 56.90M452.45 55.20L452.45 56.90M452.45 53.50L452.45 55.20M455.05 53.50L456.85 53.50M455.05 53.50L455.05 55.20M455.05 55.20L456.85 55.20M456.85 55.20L456.85 56.90M455.05 56.90L456.85 56.90M457.65 53.50L459.45 53.50M459.45 53.50L459.45 55.20M459.45 55.20L459.45 56.90M457.65 56.90L459.45 56.90M457.65 55.20L457.65 56.90M457.65 53.50L457.65 55.20M467.80 53.50L467.80 55.20M467.80 55.20L467.80 56.90M470.40 53.50L470.40 55.20M470.40 55.20L470.40 56.90M471.20 53.50L473.00 53.50M473.00 53.50L473.00 55.20M473.00 55.20L473.00 56.90M471.20 56.90L473.00 56.90M471.20 55.20L471.20 56.90M471.20 53.50L471.20 55.20M473.80 53.50L475.60 53.50M475.60 53.50L475.60 55.20M475.60 55.20L475.60 56.90M473.80 56.90L475.60 56.90M473.80 55.20L473.80 56.90M473.80 53.50L473.80 55.20M483.95 53.50L483.95 55.20M483.95 55.20L483.95 56.90M486.55 53.50L486.55 55.20M486.55 55.20L486.55 56.90M487.35 53.50L489.15 53.50M487.35 53.50L487.35 55.20M487.35 55.20L489.15 55.20M489.15 55.20L489.15 56.90M487.35 56.90L489.15 56.90M489.95 53.50L491.75 53.50M491.75 53.50L491.75 55.20M491.75 55.20L491.75 56.90M489.95 56.90L491.75 56.90M489.95 55.20L489.95 56.90M489.95 53.50L489.95 55.20M500.10 53.50L500.10 55.20M500.10 55.20L500.10 56.90M500.90 53.50L502.70 53.50M502.70 53.50L502.70 55.20M500.90 55.20L502.70 55.20M500.90 55.20L500.90 56.90M500.90 56.90L502.70 56.90M503.50 53.50L505.30 53.50M505.30 53.50L505.30 55.20M505.30 55.20L505.30 56.90M503.50 56.90L505.30 56.90M503.50 55.20L503.50 56.90M503.50 53.50L503.50 55.20M506.10 53.50L507.90 53.50M507.90 53.50L507.90 55.20M507.90 55.20L507.90 56.90M506.10 56.90L507.90 56.90M506.10 55.20L506.10 56.90M506.10 53.50L506.10 55.20M516.25 53.50L516.25 55.20M516.25 55.20L516.25 56.90M517.05 53.50L518.85 53.50M518.85 53.50L518.85 55.20M517.05 55.20L518.85 55.20M517.05 55.20L517.05 56.90M517.05 56.90L518.85 56.90M519.65 53.50L521.45 53.50M519.65 53.50L519.65 55.20M519.65 55.20L521.45 55.20M521.45 55.20L521.45 56.90M519.65 56.90L521.45 56.90M522.25 53.50L524.05 53.50M524.05 53.50L524.05 55.20M524.05 55.20L524.05 56.90M522.25 56.90L524.05 56.90M522.25 55.20L522.25 56.90M522.25 53.50L522.25 55.20M532.40 53.50L532.40 55.20M532.40 55.20L532.40 56.90M533.20 53.50L535.00 53.50M535.00 53.50L535.00 55.20M533.20 55.20L535.00 55.20M535.00 55.20L535.00 56.90M533.20 56.90L535.00 56.90M535.80 53.50L537.60 53.50M537.60 53.50L537.60 55.20M537.60 55.20L537.60 56.90M535.80 56.90L537.60 56.90M535.80 55.20L535.80 56.90M535.80 53.50L535.80 55.20M538.40 53.50L540.20 53.50M540.20 53.50L540.20 55.20M540.20 55.20L540.20 56.90M538.40 56.90L540.20 56.90M538.40 55.20L538.40 56.90M538.40 53.50L538.40 55.20M548.55 53.50L548.55 55.20M548.55 55.20L548.55 56.90M549.35 53.50L551.15 53.50M551.15 53.50L551.15 55.20M549.35 55.20L551.15 55.20M551.15 55.20L551.15 56.90M549.35 56.90L551.15 56.90M551.95 53.50L553.75 53.50M551.95 53.50L551.95 55.20M551.95 55.20L553.75 55.20M553.75 55.20L553.75 56.90M551.95 56.90L553.75 56.90M554.55 53.50L556.35 53.50M556.35 53.50L556.35 55.20M556.35 55.20L556.35 56.90M554.55 56.90L556.35 56.90M554.55 55.20L554.55 56.90M554.55 53.50L554.55 55.20M564.70 53.50L564.70 55.20M564.70 55.20L564.70 56.90M565.50 53.50L565.50 55.20M565.50 55.20L567.30 55.20M567.30 53.50L567.30 55.20M567.30 55.20L567.30 56.90M568.10 53.50L569.90 53.50M569.90 53.50L569.90 55.20M569.90 55.20L569.90 56.90M568.10 56.90L569.90 56.90M568.10 55.20L568.10 56.90M568.10 53.50L568.10 55.20M570.70 53.50L572.50 53.50M572.50 53.50L572.50 55.20M572.50 55.20L572.50 56.90M570.70 56.90L572.50 56.90M570.70 55.20L570.70 56.90M570.70 53.50L570.70 55.20M580.85 53.50L580.85 55.20M580.85 55.20L580.85 56.90M581.65 53.50L581.65 55.20M581.65 55.20L583.45 55.20M583.45 53.50L583.45 55.20M583.45 55.20L583.45 56.90M584.25 53.50L586.05 53.50M584.25 53.50L584.25 55.20M584.25 55.20L586.05 55.20M586.05 55.20L586.05 56.90M584.25 56.90L586.05 56.90M586.85 53.50L588.65 53.50M588.65 53.50L588.65 55.20M588.65 55.20L588.65 56.90M586.85 56.90L588.65 56.90M586.85 55.20L586.85 56.90M586.85 53.50L586.85 55.20" stroke="#3a3a3a" stroke-width="0.6" fill="none"/>
</svg>
<svg class="a" style="left:31px;top:60px" width="8" height="409" viewBox="31 60 8 409">
<rect x="31" y="60" width="8" height="409" fill="#fff"/>
<rect x="38" y="60" width="0.8" height="409" fill="#555"/>
<path d="M31.3 67.06h7M31.3 83.23h7M31.3 99.40h7M31.3 115.57h7M31.3 131.74h7M31.3 147.91h7M31.3 164.08h7M31.3 180.25h7M31.3 196.42h7M31.3 212.59h7M31.3 228.76h7M31.3 244.93h7M31.3 261.10h7M31.3 277.27h7M31.3 293.44h7M31.3 309.61h7M31.3 325.78h7M31.3 341.95h7M31.3 358.12h7M31.3 374.29h7M31.3 390.46h7M31.3 406.63h7M31.3 422.80h7M31.3 438.97h7M31.3 455.14h7" stroke="#333" stroke-width="0.9"/>
<path d="M38 59.89h-1.6v1.4h1.6zM38 63.13h-1.6v1.4h1.6zM38 69.59h-1.6v1.4h1.6zM38 72.83h-1.6v1.4h1.6zM38 76.06h-1.6v1.4h1.6zM38 79.30h-1.6v1.4h1.6zM38 85.76h-1.6v1.4h1.6zM38 89.00h-1.6v1.4h1.6zM38 92.23h-1.6v1.4h1.6zM38 95.47h-1.6v1.4h1.6zM38 101.93h-1.6v1.4h1.6zM38 105.17h-1.6v1.4h1.6zM38 108.40h-1.6v1.4h1.6zM38 111.64h-1.6v1.4h1.6zM38 118.10h-1.6v1.4h1.6zM38 121.34h-1.6v1.4h1.6zM38 124.57h-1.6v1.4h1.6zM38 127.81h-1.6v1.4h1.6zM38 134.27h-1.6v1.4h1.6zM38 137.51h-1.6v1.4h1.6zM38 140.74h-1.6v1.4h1.6zM38 143.98h-1.6v1.4h1.6zM38 150.44h-1.6v1.4h1.6zM38 153.68h-1.6v1.4h1.6zM38 156.91h-1.6v1.4h1.6zM38 160.15h-1.6v1.4h1.6zM38 166.61h-1.6v1.4h1.6zM38 169.85h-1.6v1.4h1.6zM38 173.08h-1.6v1.4h1.6zM38 176.32h-1.6v1.4h1.6zM38 182.78h-1.6v1.4h1.6zM38 186.02h-1.6v1.4h1.6zM38 189.25h-1.6v1.4h1.6zM38 192.49h-1.6v1.4h1.6zM38 198.95h-1.6v1.4h1.6zM38 202.19h-1.6v1.4h1.6zM38 205.42h-1.6v1.4h1.6zM38 208.66h-1.6v1.4h1.6zM38 215.12h-1.6v1.4h1.6zM38 218.36h-1.6v1.4h1.6zM38 221.59h-1.6v1.4h1.6zM38 224.83h-1.6v1.4h1.6zM38 231.29h-1.6v1.4h1.6zM38 234.53h-1.6v1.4h1.6zM38 237.76h-1.6v1.4h1.6zM38 241.00h-1.6v1.4h1.6zM38 247.46h-1.6v1.4h1.6zM38 250.70h-1.6v1.4h1.6zM38 253.93h-1.6v1.4h1.6zM38 257.17h-1.6v1.4h1.6zM38 263.63h-1.6v1.4h1.6zM38 266.87h-1.6v1.4h1.6zM38 270.10h-1.6v1.4h1.6zM38 273.34h-1.6v1.4h1.6zM38 279.80h-1.6v1.4h1.6zM38 283.04h-1.6v1.4h1.6zM38 286.27h-1.6v1.4h1.6zM38 289.51h-1.6v1.4h1.6zM38 295.97h-1.6v1.4h1.6zM38 299.21h-1.6v1.4h1.6zM38 302.44h-1.6v1.4h1.6zM38 305.68h-1.6v1.4h1.6zM38 312.14h-1.6v1.4h1.6zM38 315.38h-1.6v1.4h1.6zM38 318.61h-1.6v1.4h1.6zM38 321.85h-1.6v1.4h1.6zM38 328.31h-1.6v1.4h1.6zM38 331.55h-1.6v1.4h1.6zM38 334.78h-1.6v1.4h1.6zM38 338.02h-1.6v1.4h1.6zM38 344.48h-1.6v1.4h1.6zM38 347.72h-1.6v1.4h1.6zM38 350.95h-1.6v1.4h1.6zM38 354.19h-1.6v1.4h1.6zM38 360.65h-1.6v1.4h1.6zM38 363.89h-1.6v1.4h1.6zM38 367.12h-1.6v1.4h1.6zM38 370.36h-1.6v1.4h1.6zM38 376.82h-1.6v1.4h1.6zM38 380.06h-1.6v1.4h1.6zM38 383.29h-1.6v1.4h1.6zM38 386.53h-1.6v1.4h1.6zM38 392.99h-1.6v1.4h1.6zM38 396.23h-1.6v1.4h1.6zM38 399.46h-1.6v1.4h1.6zM38 402.70h-1.6v1.4h1.6zM38 409.16h-1.6v1.4h1.6zM38 412.40h-1.6v1.4h1.6zM38 415.63h-1.6v1.4h1.6zM38 418.87h-1.6v1.4h1.6zM38 425.33h-1.6v1.4h1.6zM38 428.57h-1.6v1.4h1.6zM38 431.80h-1.6v1.4h1.6zM38 435.04h-1.6v1.4h1.6zM38 441.50h-1.6v1.4h1.6zM38 444.74h-1.6v1.4h1.6zM38 447.97h-1.6v1.4h1.6zM38 451.21h-1.6v1.4h1.6zM38 457.67h-1.6v1.4h1.6zM38 460.91h-1.6v1.4h1.6zM38 464.14h-1.6v1.4h1.6zM38 467.38h-1.6v1.4h1.6z" fill="#333"/>
<path d="M33.90 68.56L33.90 69.86M33.90 69.86L33.90 71.16M31.70 71.66L33.90 71.66M33.90 71.66L33.90 72.96M33.90 72.96L33.90 74.26M31.70 74.26L33.90 74.26M31.70 72.96L31.70 74.26M31.70 71.66L31.70 72.96M31.70 74.76L33.90 74.76M33.90 74.76L33.90 76.06M33.90 76.06L33.90 77.36M31.70 77.36L33.90 77.36M31.70 76.06L31.70 77.36M31.70 74.76L31.70 76.06M31.70 84.73L33.90 84.73M31.70 84.73L31.70 86.03M31.70 86.03L33.90 86.03M33.90 86.03L33.90 87.33M31.70 87.33L33.90 87.33M31.70 87.83L33.90 87.83M33.90 87.83L33.90 89.13M33.90 89.13L33.90 90.43M31.70 90.43L33.90 90.43M31.70 89.13L31.70 90.43M31.70 87.83L31.70 89.13M31.70 100.90L33.90 100.90M33.90 100.90L33.90 102.20M33.90 102.20L33.90 103.50M31.70 103.50L33.90 103.50M31.70 102.20L31.70 103.50M31.70 100.90L31.70 102.20M31.70 117.07L33.90 117.07M31.70 117.07L31.70 118.37M31.70 118.37L33.90 118.37M33.90 118.37L33.90 119.67M31.70 119.67L33.90 119.67M31.70 120.17L33.90 120.17M33.90 120.17L33.90 121.47M33.90 121.47L33.90 122.77M31.70 122.77L33.90 122.77M31.70 121.47L31.70 122.77M31.70 120.17L31.70 121.47M33.90 133.24L33.90 134.54M33.90 134.54L33.90 135.84M31.70 136.34L33.90 136.34M33.90 136.34L33.90 137.64M33.90 137.64L33.90 138.94M31.70 138.94L33.90 138.94M31.70 137.64L31.70 138.94M31.70 136.34L31.70 137.64M31.70 139.44L33.90 139.44M33.90 139.44L33.90 140.74M33.90 140.74L33.90 142.04M31.70 142.04L33.90 142.04M31.70 140.74L31.70 142.04M31.70 139.44L31.70 140.74M33.90 149.41L33.90 150.71M33.90 150.71L33.90 152.01M31.70 152.51L33.90 152.51M31.70 152.51L31.70 153.81M31.70 153.81L33.90 153.81M33.90 153.81L33.90 155.11M31.70 155.11L33.90 155.11M31.70 155.61L33.90 155.61M33.90 155.61L33.90 156.91M33.90 156.91L33.90 158.21M31.70 158.21L33.90 158.21M31.70 156.91L31.70 158.21M31.70 155.61L31.70 156.91M31.70 165.58L33.90 165.58M33.90 165.58L33.90 166.88M31.70 166.88L33.90 166.88M31.70 166.88L31.70 168.18M31.70 168.18L33.90 168.18M31.70 168.68L33.90 168.68M33.90 168.68L33.90 169.98M33.90 169.98L33.90 171.28M31.70 171.28L33.90 171.28M31.70 169.98L31.70 171.28M31.70 168.68L31.70 169.98M31.70 171.78L33.90 171.78M33.90 171.78L33.90 173.08M33.90 173.08L33.90 174.38M31.70 174.38L33.90 174.38M31.70 173.08L31.70 174.38M31.70 171.78L31.70 173.08M31.70 181.75L33.90 181.75M33.90 181.75L33.90 183.05M31.70 183.05L33.90 183.05M31.70 183.05L31.70 184.35M31.70 184.35L33.90 184.35M31.70 184.85L33.90 184.85M31.70 184.85L31.70 186.15M31.70 186.15L33.90 186.15M33.90 186.15L33.90 187.45M31.70 187.45L33.90 187.45M31.70 187.95L33.90 187.95M33.90 187.95L33.90 189.25M33.90 189.25L33.90 190.55M31.70 190.55L33.90 190.55M31.70 189.25L31.70 190.55M31.70 187.95L31.70 189.25M31.70 197.92L33.90 197.92M33.90 197.92L33.90 199.22M31.70 199.22L33.90 199.22M33.90 199.22L33.90 200.52M31.70 200.52L33.90 200.52M31.70 201.02L33.90 201.02M33.90 201.02L33.90 202.32M33.90 202.32L33.90 203.62M31.70 203.62L33.90 203.62M31.70 202.32L31.70 203.62M31.70 201.02L31.70 202.32M31.70 204.12L33.90 204.12M33.90 204.12L33.90 205.42M33.90 205.42L33.90 206.72M31.70 206.72L33.90 206.72M31.70 205.42L31.70 206.72M31.70 204.12L31.70 205.42M31.70 214.09L33.90 214.09M33.90 214.09L33.90 215.39M31.70 215.39L33.90 215.39M33.90 215.39L33.90 216.69M31.70 216.69L33.90 216.69M31.70 217.19L33.90 217.19M31.70 217.19L31.70 218.49M31.70 218.49L33.90 218.49M33.90 218.49L33.90 219.79M31.70 219.79L33.90 219.79M31.70 220.29L33.90 220.29M33.90 220.29L33.90 221.59M33.90 221.59L33.90 222.89M31.70 222.89L33.90 222.89M31.70 221.59L31.70 222.89M31.70 220.29L31.70 221.59M31.70 230.26L31.70 231.56M31.70 231.56L33.90 231.56M33.90 230.26L33.90 231.56M33.90 231.56L33.90 232.86M31.70 233.36L33.90 233.36M33.90 233.36L33.90 234.66M33.90 234.66L33.90 235.96M31.70 235.96L33.90 235.96M31.70 234.66L31.70 235.96M31.70 233.36L31.70 234.66M31.70 236.46L33.90 236.46M33.90 236.46L33.90 237.76M33.90 237.76L33.90 239.06M31.70 239.06L33.90 239.06M31.70 237.76L31.70 239.06M31.70 236.46L31.70 237.76M31.70 246.43L31.70 247.73M31.70 247.73L33.90 247.73M33.90 246.43L33.90 247.73M33.90 247.73L33.90 249.03M31.70 249.53L33.90 249.53M31.70 249.53L31.70 250.83M31.70 250.83L33.90 250.83M33.90 250.83L33.90 252.13M31.70 252.13L33.90 252.13M31.70 252.63L33.90 252.63M33.90 252.63L33.90 253.93M33.90 253.93L33.90 255.23M31.70 255.23L33.90 255.23M31.70 253.93L31.70 255.23M31.70 252.63L31.70 253.93M31.70 262.60L33.90 262.60M31.70 262.60L31.70 263.90M31.70 263.90L33.90 263.90M33.90 263.90L33.90 265.20M31.70 265.20L33.90 265.20M31.70 265.70L33.90 265.70M33.90 265.70L33.90 267.00M33.90 267.00L33.90 268.30M31.70 268.30L33.90 268.30M31.70 267.00L31.70 268.30M31.70 265.70L31.70 267.00M31.70 268.80L33.90 268.80M33.90 268.80L33.90 270.10M33.90 270.10L33.90 271.40M31.70 271.40L33.90 271.40M31.70 270.10L31.70 271.40M31.70 268.80L31.70 270.10M31.70 278.77L33.90 278.77M31.70 278.77L31.70 280.07M31.70 280.07L33.90 280.07M33.90 280.07L33.90 281.37M31.70 281.37L33.90 281.37M31.70 281.87L33.90 281.87M31.70 281.87L31.70 283.17M31.70 283.17L33.90 283.17M33.90 283.17L33.90 284.47M31.70 284.47L33.90 284.47M31.70 284.97L33.90 284.97M33.90 284.97L33.90 286.27M33.90 286.27L33.90 287.57M31.70 287.57L33.90 287.57M31.70 286.27L31.70 287.57M31.70 284.97L31.70 286.27M31.70 294.94L33.90 294.94M31.70 294.94L31.70 296.24M31.70 296.24L33.90 296.24M31.70 296.24L31.70 297.54M33.90 296.24L33.90 297.54M31.70 297.54L33.90 297.54M31.70 298.04L33.90 298.04M33.90 298.04L33.90 299.34M33.90 299.34L33.90 300.64M31.70 300.64L33.90 300.64M31.70 299.34L31.70 300.64M31.70 298.04L31.70 299.34M31.70 301.14L33.90 301.14M33.90 301.14L33.90 302.44M33.90 302.44L33.90 303.74M31.70 303.74L33.90 303.74M31.70 302.44L31.70 303.74M31.70 301.14L31.70 302.44M31.70 311.11L33.90 311.11M31.70 311.11L31.70 312.41M31.70 312.41L33.90 312.41M31.70 312.41L31.70 313.71M33.90 312.41L33.90 313.71M31.70 313.71L33.90 313.71M31.70 314.21L33.90 314.21M31.70 314.21L31.70 315.51M31.70 315.51L33.90 315.51M33.90 315.51L33.90 316.81M31.70 316.81L33.90 316.81M31.70 317.31L33.90 317.31M33.90 317.31L33.90 318.61M33.90 318.61L33.90 319.91M31.70 319.91L33.90 319.91M31.70 318.61L31.70 319.91M31.70 317.31L31.70 318.61M31.70 327.28L33.90 327.28M33.90 327.28L33.90 328.58M33.90 328.58L33.90 329.88M31.70 330.38L33.90 330.38M33.90 330.38L33.90 331.68M33.90 331.68L33.90 332.98M31.70 332.98L33.90 332.98M31.70 331.68L31.70 332.98M31.70 330.38L31.70 331.68M31.70 333.48L33.90 333.48M33.90 333.48L33.90 334.78M33.90 334.78L33.90 336.08M31.70 336.08L33.90 336.08M31.70 334.78L31.70 336.08M31.70 333.48L31.70 334.78M31.70 343.45L33.90 343.45M33.90 343.45L33.90 344.75M33.90 344.75L33.90 346.05M31.70 346.55L33.90 346.55M31.70 346.55L31.70 347.85M31.70 347.85L33.90 347.85M33.90 347.85L33.90 349.15M31.70 349.15L33.90 349.15M31.70 349.65L33.90 349.65M33.90 349.65L33.90 350.95M33.90 350.95L33.90 352.25M31.70 352.25L33.90 352.25M31.70 350.95L31.70 352.25M31.70 349.65L31.70 350.95M31.70 359.62L33.90 359.62M33.90 359.62L33.90 360.92M33.90 360.92L33.90 362.22M31.70 362.22L33.90 362.22M31.70 360.92L31.70 362.22M31.70 359.62L31.70 360.92M31.70 360.92L33.90 360.92M31.70 362.72L33.90 362.72M33.90 362.72L33.90 364.02M33.90 364.02L33.90 365.32M31.70 365.32L33.90 365.32M31.70 364.02L31.70 365.32M31.70 362.72L31.70 364.02M31.70 365.82L33.90 365.82M33.90 365.82L33.90 367.12M33.90 367.12L33.90 368.42M31.70 368.42L33.90 368.42M31.70 367.12L31.70 368.42M31.70 365.82L31.70 367.12M31.70 375.79L33.90 375.79M33.90 375.79L33.90 377.09M33.90 377.09L33.90 378.39M31.70 378.39L33.90 378.39M31.70 377.09L31.70 378.39M31.70 375.79L31.70 377.09M31.70 377.09L33.90 377.09M31.70 378.89L33.90 378.89M31.70 378.89L31.70 380.19M31.70 380.19L33.90 380.19M33.90 380.19L33.90 381.49M31.70 381.49L33.90 381.49M31.70 381.99L33.90 381.99M33.90 381.99L33.90 383.29M33.90 383.29L33.90 384.59M31.70 384.59L33.90 384.59M31.70 383.29L31.70 384.59M31.70 381.99L31.70 383.29M31.70 391.96L33.90 391.96M33.90 391.96L33.90 393.26M33.90 393.26L33.90 394.56M31.70 394.56L33.90 394.56M31.70 391.96L31.70 393.26M31.70 393.26L33.90 393.26M31.70 395.06L33.90 395.06M33.90 395.06L33.90 396.36M33.90 396.36L33.90 397.66M31.70 397.66L33.90 397.66M31.70 396.36L31.70 397.66M31.70 395.06L31.70 396.36M31.70 398.16L33.90 398.16M33.90 398.16L33.90 399.46M33.90 399.46L33.90 400.76M31.70 400.76L33.90 400.76M31.70 399.46L31.70 400.76M31.70 398.16L31.70 399.46M31.70 408.13L33.90 408.13M33.90 408.13L33.90 409.43M33.90 409.43L33.90 410.73M31.70 410.73L33.90 410.73M31.70 408.13L31.70 409.43M31.70 409.43L33.90 409.43M31.70 411.23L33.90 411.23M31.70 411.23L31.70 412.53M31.70 412.53L33.90 412.53M33.90 412.53L33.90 413.83M31.70 413.83L33.90 413.83M31.70 414.33L33.90 414.33M33.90 414.33L33.90 415.63M33.90 415.63L33.90 416.93M31.70 416.93L33.90 416.93M31.70 415.63L31.70 416.93M31.70 414.33L31.70 415.63M33.90 424.30L33.90 425.60M33.90 425.60L33.90 426.90M31.70 427.40L33.90 427.40M33.90 427.40L33.90 428.70M33.90 428.70L33.90 430.00M31.70 430.00L33.90 430.00M31.70 428.70L31.70 430.00M31.70 427.40L31.70 428.70M31.70 430.50L33.90 430.50M33.90 430.50L33.90 431.80M33.90 431.80L33.90 433.10M31.70 433.10L33.90 433.10M31.70 431.80L31.70 433.10M31.70 430.50L31.70 431.80M31.70 433.60L33.90 433.60M33.90 433.60L33.90 434.90M33.90 434.90L33.90 436.20M31.70 436.20L33.90 436.20M31.70 434.90L31.70 436.20M31.70 433.60L31.70 434.90M33.90 440.47L33.90 441.77M33.90 441.77L33.90 443.07M31.70 443.57L33.90 443.57M33.90 443.57L33.90 444.87M33.90 444.87L33.90 446.17M31.70 446.17L33.90 446.17M31.70 444.87L31.70 446.17M31.70 443.57L31.70 444.87M31.70 446.67L33.90 446.67M31.70 446.67L31.70 447.97M31.70 447.97L33.90 447.97M33.90 447.97L33.90 449.27M31.70 449.27L33.90 449.27M31.70 449.77L33.90 449.77M33.90 449.77L33.90 451.07M33.90 451.07L33.90 452.37M31.70 452.37L33.90 452.37M31.70 451.07L31.70 452.37M31.70 449.77L31.70 451.07M33.90 456.64L33.90 457.94M33.90 457.94L33.90 459.24M33.90 459.74L33.90 461.04M33.90 461.04L33.90 462.34M31.70 462.84L33.90 462.84M33.90 462.84L33.90 464.14M33.90 464.14L33.90 465.44M31.70 465.44L33.90 465.44M31.70 464.14L31.70 465.44M31.70 462.84L31.70 464.14M31.70 465.94L33.90 465.94M33.90 465.94L33.90 467.24M33.90 467.24L33.90 468.54M31.70 468.54L33.90 468.54M31.70 467.24L31.70 468.54M31.70 465.94L31.70 467.24" stroke="#3a3a3a" stroke-width="0.65" fill="none"/>
</svg>
<svg class="a" style="left:31px;top:52px" width="7" height="8" viewBox="31 52 7 8"><rect x="31" y="52" width="7" height="8" fill="#fff"/><path d="M35.5 52v7M31 56.5h6" stroke="#9a9a9a" stroke-width="0.6" stroke-dasharray="1 1"/></svg>
<!-- canvas -->
<div class="a" style="left:39px;top:60px;width:554px;height:409px;background:#c0c0c0"></div>
<div class="a" style="left:109px;top:99px;width:413px;height:331px;background:#fff;box-shadow:1px 1px 1.2px #b2b2b2"></div>


<!-- document artwork -->
<svg class="a" style="left:0;top:0" width="619" height="480" viewBox="0 0 619 480">
<defs>
<radialGradient id="g1" cx="0.42" cy="0.34" r="0.68">
<stop offset="0" stop-color="#c2d0e8"/><stop offset="0.35" stop-color="#9fb1d0"/><stop offset="0.72" stop-color="#788bae"/><stop offset="1" stop-color="#46556f"/>
</radialGradient>
<radialGradient id="g2" cx="0.45" cy="0.32" r="0.7">
<stop offset="0" stop-color="#aabbd8"/><stop offset="0.4" stop-color="#8a9dbf"/><stop offset="0.78" stop-color="#687b9c"/><stop offset="1" stop-color="#44526d"/>
</radialGradient>
<radialGradient id="g3" cx="0.45" cy="0.34" r="0.7">
<stop offset="0" stop-color="#9aabc8"/><stop offset="0.5" stop-color="#7a8dae"/><stop offset="1" stop-color="#46556f"/>
</radialGradient>
<radialGradient id="g4" cx="0.5" cy="0.3" r="0.75" fx="0.5" fy="0.12">
<stop offset="0" stop-color="#b4c4e0"/><stop offset="0.35" stop-color="#8ea1c3"/><stop offset="0.75" stop-color="#687b9a"/><stop offset="1" stop-color="#414f68"/>
</radialGradient>
<radialGradient id="hl" cx="0.5" cy="0.5" r="0.5">
<stop offset="0" stop-color="#ffffff"/><stop offset="0.45" stop-color="#f4f7fc" stop-opacity="0.85"/><stop offset="1" stop-color="#ffffff" stop-opacity="0"/>
</radialGradient>
<pattern id="pat" patternUnits="userSpaceOnUse" x="110.5" y="99.9" width="25.87" height="25.87">
<rect width="25.87" height="25.87" fill="#4e5b75"/>
<ellipse cx="1.50" cy="14.80" rx="4.6" ry="4.6" fill="url(#g3)" stroke="#4a5874" stroke-width="0.45"/>
<ellipse cx="-24.37" cy="14.80" rx="4.6" ry="4.6" fill="url(#g3)" stroke="#4a5874" stroke-width="0.45"/>
<ellipse cx="27.37" cy="14.80" rx="4.6" ry="4.6" fill="url(#g3)" stroke="#4a5874" stroke-width="0.45"/>
<ellipse cx="23.80" cy="12.30" rx="4.6" ry="4.8" fill="url(#g3)" stroke="#4a5874" stroke-width="0.45"/>
<ellipse cx="-2.07" cy="12.30" rx="4.6" ry="4.8" fill="url(#g3)" stroke="#4a5874" stroke-width="0.45"/>
<ellipse cx="49.67" cy="12.30" rx="4.6" ry="4.8" fill="url(#g3)" stroke="#4a5874" stroke-width="0.45"/>
<ellipse cx="3.00" cy="1.00" rx="5.6" ry="4.8" fill="url(#g4)" stroke="#4a5874" stroke-width="0.45" transform="rotate(45 3.00 1.00)"/>
<ellipse cx="3.00" cy="-24.87" rx="5.6" ry="4.8" fill="url(#g4)" stroke="#4a5874" stroke-width="0.45" transform="rotate(45 3.00 -24.87)"/>
<ellipse cx="3.00" cy="26.87" rx="5.6" ry="4.8" fill="url(#g4)" stroke="#4a5874" stroke-width="0.45" transform="rotate(45 3.00 26.87)"/>
<ellipse cx="-22.87" cy="1.00" rx="5.6" ry="4.8" fill="url(#g4)" stroke="#4a5874" stroke-width="0.45" transform="rotate(45 -22.87 1.00)"/>
<ellipse cx="-22.87" cy="-24.87" rx="5.6" ry="4.8" fill="url(#g4)" stroke="#4a5874" stroke-width="0.45" transform="rotate(45 -22.87 -24.87)"/>
<ellipse cx="-22.87" cy="26.87" rx="5.6" ry="4.8" fill="url(#g4)" stroke="#4a5874" stroke-width="0.45" transform="rotate(45 -22.87 26.87)"/>
<ellipse cx="28.87" cy="1.00" rx="5.6" ry="4.8" fill="url(#g4)" stroke="#4a5874" stroke-width="0.45" transform="rotate(45 28.87 1.00)"/>
<ellipse cx="28.87" cy="-24.87" rx="5.6" ry="4.8" fill="url(#g4)" stroke="#4a5874" stroke-width="0.45" transform="rotate(45 28.87 -24.87)"/>
<ellipse cx="28.87" cy="26.87" rx="5.6" ry="4.8" fill="url(#g4)" stroke="#4a5874" stroke-width="0.45" transform="rotate(45 28.87 26.87)"/>
<ellipse cx="21.00" cy="19.30" rx="5.6" ry="4.9" fill="url(#g4)" stroke="#4a5874" stroke-width="0.45" transform="rotate(45 21.00 19.30)"/>
<ellipse cx="21.00" cy="-6.57" rx="5.6" ry="4.9" fill="url(#g4)" stroke="#4a5874" stroke-width="0.45" transform="rotate(45 21.00 -6.57)"/>
<ellipse cx="21.00" cy="45.17" rx="5.6" ry="4.9" fill="url(#g4)" stroke="#4a5874" stroke-width="0.45" transform="rotate(45 21.00 45.17)"/>
<ellipse cx="-4.87" cy="19.30" rx="5.6" ry="4.9" fill="url(#g4)" stroke="#4a5874" stroke-width="0.45" transform="rotate(45 -4.87 19.30)"/>
<ellipse cx="-4.87" cy="-6.57" rx="5.6" ry="4.9" fill="url(#g4)" stroke="#4a5874" stroke-width="0.45" transform="rotate(45 -4.87 -6.57)"/>
<ellipse cx="-4.87" cy="45.17" rx="5.6" ry="4.9" fill="url(#g4)" stroke="#4a5874" stroke-width="0.45" transform="rotate(45 -4.87 45.17)"/>
<ellipse cx="46.87" cy="19.30" rx="5.6" ry="4.9" fill="url(#g4)" stroke="#4a5874" stroke-width="0.45" transform="rotate(45 46.87 19.30)"/>
<ellipse cx="46.87" cy="-6.57" rx="5.6" ry="4.9" fill="url(#g4)" stroke="#4a5874" stroke-width="0.45" transform="rotate(45 46.87 -6.57)"/>
<ellipse cx="46.87" cy="45.17" rx="5.6" ry="4.9" fill="url(#g4)" stroke="#4a5874" stroke-width="0.45" transform="rotate(45 46.87 45.17)"/>
<ellipse cx="12.30" cy="0.90" rx="6.8" ry="5.8" fill="url(#g4)" stroke="#4a5874" stroke-width="0.45" transform="rotate(40 12.30 0.90)"/>
<ellipse cx="12.30" cy="-24.97" rx="6.8" ry="5.8" fill="url(#g4)" stroke="#4a5874" stroke-width="0.45" transform="rotate(40 12.30 -24.97)"/>
<ellipse cx="12.30" cy="26.77" rx="6.8" ry="5.8" fill="url(#g4)" stroke="#4a5874" stroke-width="0.45" transform="rotate(40 12.30 26.77)"/>
<ellipse cx="-13.57" cy="0.90" rx="6.8" ry="5.8" fill="url(#g4)" stroke="#4a5874" stroke-width="0.45" transform="rotate(40 -13.57 0.90)"/>
<ellipse cx="-13.57" cy="-24.97" rx="6.8" ry="5.8" fill="url(#g4)" stroke="#4a5874" stroke-width="0.45" transform="rotate(40 -13.57 -24.97)"/>
<ellipse cx="-13.57" cy="26.77" rx="6.8" ry="5.8" fill="url(#g4)" stroke="#4a5874" stroke-width="0.45" transform="rotate(40 -13.57 26.77)"/>
<ellipse cx="38.17" cy="0.90" rx="6.8" ry="5.8" fill="url(#g4)" stroke="#4a5874" stroke-width="0.45" transform="rotate(40 38.17 0.90)"/>
<ellipse cx="38.17" cy="-24.97" rx="6.8" ry="5.8" fill="url(#g4)" stroke="#4a5874" stroke-width="0.45" transform="rotate(40 38.17 -24.97)"/>
<ellipse cx="38.17" cy="26.77" rx="6.8" ry="5.8" fill="url(#g4)" stroke="#4a5874" stroke-width="0.45" transform="rotate(40 38.17 26.77)"/>
<ellipse cx="18.80" cy="6.00" rx="6.8" ry="5.8" fill="url(#g4)" stroke="#4a5874" stroke-width="0.45" transform="rotate(45 18.80 6.00)"/>
<ellipse cx="18.80" cy="-19.87" rx="6.8" ry="5.8" fill="url(#g4)" stroke="#4a5874" stroke-width="0.45" transform="rotate(45 18.80 -19.87)"/>
<ellipse cx="18.80" cy="31.87" rx="6.8" ry="5.8" fill="url(#g4)" stroke="#4a5874" stroke-width="0.45" transform="rotate(45 18.80 31.87)"/>
<ellipse cx="-7.07" cy="6.00" rx="6.8" ry="5.8" fill="url(#g4)" stroke="#4a5874" stroke-width="0.45" transform="rotate(45 -7.07 6.00)"/>
<ellipse cx="-7.07" cy="-19.87" rx="6.8" ry="5.8" fill="url(#g4)" stroke="#4a5874" stroke-width="0.45" transform="rotate(45 -7.07 -19.87)"/>
<ellipse cx="-7.07" cy="31.87" rx="6.8" ry="5.8" fill="url(#g4)" stroke="#4a5874" stroke-width="0.45" transform="rotate(45 -7.07 31.87)"/>
<ellipse cx="44.67" cy="6.00" rx="6.8" ry="5.8" fill="url(#g4)" stroke="#4a5874" stroke-width="0.45" transform="rotate(45 44.67 6.00)"/>
<ellipse cx="44.67" cy="-19.87" rx="6.8" ry="5.8" fill="url(#g4)" stroke="#4a5874" stroke-width="0.45" transform="rotate(45 44.67 -19.87)"/>
<ellipse cx="44.67" cy="31.87" rx="6.8" ry="5.8" fill="url(#g4)" stroke="#4a5874" stroke-width="0.45" transform="rotate(45 44.67 31.87)"/>
<ellipse cx="9.60" cy="18.80" rx="6.4" ry="4.4" fill="url(#g2)" stroke="#4a5874" stroke-width="0.45"/>
<ellipse cx="9.2" cy="15.9" rx="3.6" ry="0.9" fill="#bccae2" opacity="0.6"/>
<ellipse cx="9.00" cy="10.80" rx="7.0" ry="5.4" fill="url(#g1)" stroke="#4a5874" stroke-width="0.45"/>
<ellipse cx="7.4" cy="5.4" rx="0.9" ry="1.1" fill="#8fa0c0"/>
<ellipse cx="5.4" cy="9.0" rx="1.9" ry="1.7" fill="url(#hl)"/><ellipse cx="5.4" cy="9.0" rx="0.8" ry="0.7" fill="#fff"/>
<ellipse cx="9.1" cy="9.1" rx="1.9" ry="1.7" fill="url(#hl)"/><ellipse cx="9.1" cy="9.1" rx="0.8" ry="0.7" fill="#fff"/>
<ellipse cx="21.5" cy="2.6" rx="1.2" ry="0.9" fill="url(#hl)" opacity="0.5"/>
</pattern>
</defs>
<polygon points="301.2,126 370,227.9 386.25,253.75 391,260.3 396,265.2 402.5,268.75 413.75,275 427.5,282.5 480,309.2 509.6,324 348.5,390.6 328.3,399.4 302.4,390.1 132,329.3 117.2,323.9 132,314.1 140,308.7 171.25,290.9 200,274.3 207.5,269.6 212,265.3 216,259.3 220.2,251.5 227.5,240 247.8,207.8 273.1,170" fill="url(#pat)"/>
<polygon points="301.2,126 370,227.9 386.25,253.75 391,260.3 396,265.2 402.5,268.75 413.75,275 427.5,282.5 480,309.2 509.6,324 348.5,390.6 328.3,399.4 302.4,390.1 132,329.3 117.2,323.9 132,314.1 140,308.7 171.25,290.9 200,274.3 207.5,269.6 212,265.3 216,259.3 220.2,251.5 227.5,240 247.8,207.8 273.1,170" fill="none" stroke="#fff" stroke-width="1" opacity="0.6"/>
<polygon points="301.2,126 370,227.9 386.25,253.75 391,260.3 396,265.2 402.5,268.75 413.75,275 427.5,282.5 480,309.2 509.6,324 348.5,390.6 328.3,399.4 302.4,390.1 132,329.3 117.2,323.9 132,314.1 140,308.7 171.25,290.9 200,274.3 207.5,269.6 212,265.3 216,259.3 220.2,251.5 227.5,240 247.8,207.8 273.1,170" fill="none" stroke="#202226" stroke-width="1" stroke-dasharray="2.5 0.9" opacity="0.9"/>
</svg>

<!-- scrollbars -->
<div class="a" style="left:593px;top:52px;width:7px;height:417px;background:#fbfbf8"></div>
<svg class="a" style="left:593px;top:53px" width="7" height="8"><rect x="0.5" y="0.5" width="6.5" height="7" fill="#f4f4ee"/><path d="M1.5 5l2-2l2 2" fill="none" stroke="#c8c8c0" stroke-width="1"/></svg>
<svg class="a" style="left:593px;top:461px" width="7" height="8"><rect x="0.5" y="0.5" width="6.5" height="7" fill="#f4f4ee"/><path d="M1.5 3l2 2l2-2" fill="none" stroke="#b8b8b0" stroke-width="1"/></svg>
<div class="a" style="left:155px;top:469px;width:438px;height:7px;background:#fbfbf8"></div>
<svg class="a" style="left:155px;top:469px" width="8" height="7"><rect x="0.5" y="0" width="7" height="7" fill="#f4f4ee"/><path d="M5 1.5l-2 2l2 2" fill="none" stroke="#d0d0c8" stroke-width="1"/></svg>
<svg class="a" style="left:585px;top:469px" width="8" height="7"><rect x="0.5" y="0" width="7" height="7" fill="#eeeee8"/><path d="M3 1.5l2 2l-2 2" fill="none" stroke="#a8a8a0" stroke-width="1"/></svg>
<div class="a" style="left:593px;top:469px;width:7px;height:7px;background:#d8d8d8"></div>
<!-- status bar -->
<div class="a" style="left:31px;top:469px;width:124px;height:7px;background:#d6d6d6"></div>
<div class="a" style="left:31.5px;top:469px;width:23px;height:7px;background:#fff;border:0.6px solid #9fb3cc"></div>
<div class="gt a" style="left:34px;top:469.8px;font-size:5.2px;line-height:6px;color:#111;transform:scaleX(0.88);transform-origin:left">66,67%</div>
<svg class="a" style="left:56px;top:469.5px" width="8" height="7" viewBox="0 0 8 7"><rect x="0.5" y="0.5" width="7" height="6" fill="#cfcfcf"/><circle cx="4" cy="3.5" r="2.2" fill="none" stroke="#555" stroke-width="0.7"/><path d="M4 2.2v1.5h1" stroke="#555" stroke-width="0.6" fill="none"/></svg>
<div class="a" style="left:65.5px;top:469px;width:0.8px;height:7px;background:#a8a8a8"></div>
<div class="gt a" style="left:81.5px;top:469.5px;font-size:5.8px;line-height:6px;color:#1a1a1a;transform:scaleX(0.82);transform-origin:left">Doc: 3,75 MB/0,20 MB</div>
<div class="a" style="left:147px;top:469px;width:8px;height:7px;background:#dcdcdc;border-left:0.6px solid #9a9a9a"></div>
<svg class="a" style="left:149px;top:470px" width="5" height="6"><path d="M1 0.5l3 2.5l-3 2.5z" fill="#111"/></svg>

<!-- right panel -->
<div class="a" style="left:600px;top:43px;width:17px;height:6px;background:#3e3e3e"></div>
<svg class="a" style="left:610px;top:44px" width="6" height="4"><path d="M0.8 1l1.2 1l-1.2 1M3.2 1l1.2 1l-1.2 1" fill="none" stroke="#d8d8d8" stroke-width="0.7"/></svg>
<div class="a" style="left:600px;top:49px;width:17px;height:36px;background:#d6d6d6;border:1px solid #a8a8a8;border-top:none"></div>
<div class="a" style="left:600px;top:85px;width:17px;height:64px;background:#d6d6d6;border:1px solid #a8a8a8;border-top:1px solid #8c8c8c"></div>
<div class="a" style="left:602px;top:51px;width:14px;height:0.8px;background:#c0c0c0"></div>
<div class="a" style="left:602px;top:87px;width:14px;height:0.8px;background:#c0c0c0"></div>
<svg class="a" style="left:600px;top:49px" width="17" height="100" viewBox="600 49 17 100">
<!-- paragraph -->
<path d="M609.5 57.5h2.5v7M611 57.5v7" stroke="#333" stroke-width="0.9" fill="none"/>
<circle cx="608.5" cy="59.5" r="2" fill="#333"/>
<!-- character A| -->
<path d="M605.5 79.5l2.8-7.8l2.8 7.8M606.5 77h3.6" stroke="#333" stroke-width="1" fill="none"/>
<path d="M612.5 71.5v8" stroke="#666" stroke-width="0.7"/>
<!-- layers -->
<path d="M605 97l4.5-2.5l4.5 2.5l-4.5 2.5z" fill="#2a2a2a"/>
<path d="M605 95l4.5-2.5l4.5 2.5l-4.5 2.5z" fill="#5a5a5a" stroke="#eee" stroke-width="0.4"/>
<!-- channels -->
<circle cx="609.5" cy="111.5" r="3.6" fill="#444"/>
<circle cx="609.5" cy="110.3" r="2" fill="#e8e8e8"/>
<circle cx="607.8" cy="112.8" r="1.6" fill="#999"/>
<circle cx="611.2" cy="112.8" r="1.6" fill="#777"/>
<!-- paths -->
<rect x="606" y="121.5" width="7" height="5" fill="none" stroke="#444" stroke-width="0.8"/>
<path d="M606.5 122q3 1.2 6 0M606.5 126q3-1.2 6 0" fill="none" stroke="#444" stroke-width="0.7"/>
<rect x="605" y="120.3" width="2" height="2" fill="#222"/><rect x="612" y="120.3" width="2" height="2" fill="#222"/>
<rect x="605" y="125.5" width="2" height="2" fill="#222"/><rect x="612" y="125.5" width="2" height="2" fill="#222"/>
<!-- history -->
<path d="M606 137.5q0-1.5 1.5-1.5q1.5 0 1.5 1.5q0 1-1.5 1.5q1.5 0.5 1.5 1.5q0 1.5-1.5 1.5q-1.5 0-1.5-1.5" fill="none" stroke="#333" stroke-width="0.9"/>
<path d="M610.5 136.5h2.5l-1 3q2 0.5 1.5 2.5q-0.8 1.5-2.5 1" fill="none" stroke="#333" stroke-width="0.9"/>
<rect x="606" y="143" width="1.2" height="1.2" fill="#333"/>
</svg>
<div class="a" style="left:600px;top:149px;width:18px;height:327px;background:#606060"></div>

<!-- bottom -->
<div class="a" style="left:0;top:476px;width:619px;height:2px;background:#c0bfb8"></div>
<div class="a" style="left:0;top:478px;width:619px;height:2px;background:#2a6fd0"></div>
</body></html>
